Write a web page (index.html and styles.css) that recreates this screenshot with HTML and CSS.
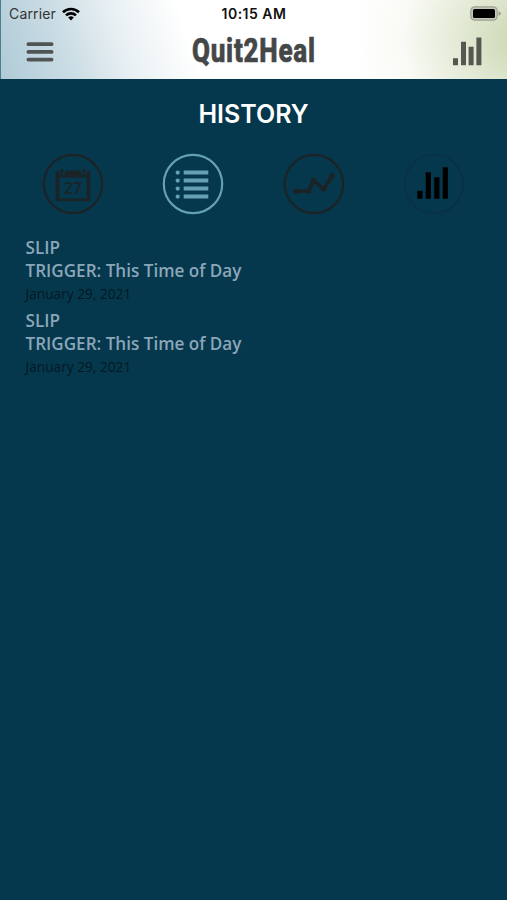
FILE: index.html
```html
<!DOCTYPE html>
<html lang="en">
<head>
    <meta charset="UTF-8">
    <meta name="viewport" content="width=device-width, initial-scale=1.0">
    <title>Quit2Heal</title>
    <link rel="stylesheet" href="styles.css">
</head>
<body>
    <header class="header">
        <div class="status-bar">
            <div class="carrier">
                <span>Carrier</span>
                <svg class="wifi" width="18" height="14" viewBox="0 0 18 14" fill="none" stroke="#000" stroke-width="2.6">
                    <path d="M1 5.2a11.6 11.6 0 0 1 16 0"/>
                    <path d="M4 8.4a7.2 7.2 0 0 1 10 0"/>
                    <path d="M9 13.4 6.2 10.6a4 4 0 0 1 5.6 0z" fill="#000" stroke="none"/>
                </svg>
            </div>
            <span class="time">10:15 AM</span>
            <svg class="battery" width="31" height="15" viewBox="0 0 31 15">
                <rect x=".8" y=".8" width="26.4" height="13.4" rx="4" fill="#c3c8b8" stroke="#9da294" stroke-width="1.2"/>
                <rect x="3" y="3" width="22" height="9" rx="1.6"/>
                <path d="M28.6 5.2q2.2 1 2.2 2.3t-2.2 2.3z" fill="#8f938b"/>
            </svg>
        </div>
        <div class="nav-bar">
            <svg class="menu" width="28" height="20" viewBox="0 0 28 20" stroke="#505456" stroke-width="3.8" stroke-linecap="round">
                <path d="M2.4 2.2h23.2M2.4 9.9h23.2M2.4 17.6h23.2"/>
            </svg>
            <span class="logo">Quit2Heal</span>
            <svg class="stats" width="29" height="29" viewBox="0 0 29 29" fill="#555851">
                <path d="M0 21.3h5v7H0zM8 4.7h5v23.6H8zM15.6 9.7h5v18.6h-5zM23.4.6h5v27.7h-5z"/>
            </svg>
        </div>
    </header>

    <main class="content">
        <h1>HISTORY</h1>
        <nav class="tabs">
            <svg class="tab" viewBox="0 0 62 62">
                <circle cx="31" cy="31" r="29.2"/>
                <path class="solid" fill-rule="evenodd" d="M13.7 18h3.2v3.6h6V18h2v1.2h12V18h2v3.6h6V18h3.4v30.3H13.7zM17.3 24.5v21h27.4v-21z"/>
                <path class="solid" d="M18.2 16h3.2v4.5h-3.2zM23.8 17.5h14V22h-14zM40.6 16h3.2v4.5h-3.2z"/>
                <text x="31" y="41">27</text>
            </svg>
            <svg class="tab active" viewBox="0 0 62 62">
                <circle cx="31" cy="31" r="29.2"/>
                <path class="solid" d="M21.7 17.6h24.6v4H21.7zM21.7 25.6h24.6v4H21.7zM21.7 33.6h24.6v4H21.7zM21.7 41.6h24.6v4H21.7z"/>
                <g class="solid">
                    <circle cx="15.7" cy="19.6" r="2.1"/>
                    <circle cx="15.7" cy="27.6" r="2.1"/>
                    <circle cx="15.7" cy="35.6" r="2.1"/>
                    <circle cx="15.7" cy="43.6" r="2.1"/>
                </g>
            </svg>
            <svg class="tab" viewBox="0 0 62 62">
                <circle cx="31" cy="31" r="29.2"/>
                <path class="trend" d="M13 38.2h12.3l5.4-10.9 10 8.7 8.6-13.3"/>
                <g class="solid">
                    <circle cx="13" cy="38.2" r="2.8"/>
                    <circle cx="25.3" cy="38" r="2.8"/>
                    <circle cx="30.7" cy="27.5" r="2.8"/>
                    <circle cx="40.7" cy="35.8" r="2.8"/>
                    <circle cx="49.3" cy="22.7" r="2.8"/>
                </g>
            </svg>
            <svg class="tab bars" viewBox="0 0 62 62">
                <circle cx="31" cy="31" r="29.2"/>
                <path class="solid" d="M14.3 37.7h5.2v8h-5.2zM22.7 19.3h5.2v26.4h-5.2zM31.3 24.3h5.2v21.4h-5.2zM39.7 14.3h5.2v31.4h-5.2z"/>
            </svg>
        </nav>
        <ul class="history">
            <li>
                <p>SLIP</p>
                <p>TRIGGER: This Time of Day</p>
                <p class="date">January 29, 2021</p>
            </li>
            <li>
                <p>SLIP</p>
                <p>TRIGGER: This Time of Day</p>
                <p class="date">January 29, 2021</p>
            </li>
        </ul>
    </main>
</body>
</html>
```
FILE: styles.css
```css
* {
    box-sizing: border-box;
}
body {
    margin: 0;
    height: 900px;
    overflow: hidden;
    background-color: #05384c;
    font-family: "Open Sans", "Noto Sans", sans-serif;
}
.header {
    height: 79px;
    border-left: 1px solid #4b7f8e;
    background: radial-gradient(ellipse 170px 150px at 103% 50%, #cbd6b0 0%, rgba(218, 227, 200, 0.8) 35%, rgba(245, 247, 238, 0.6) 70%, rgba(255, 255, 255, 0) 100%),
        linear-gradient(72deg, #afcbd7 0%, #cbdde5 14%, #e9f0f3 25%, #fff 38%);
}
.status-bar {
    display: grid;
    grid-template-columns: 1fr auto 1fr;
    align-items: center;
    height: 27px;
    padding: 0 6px 0 8px;
    font-family: Inter, sans-serif;
    font-size: 14px;
    color: #111;
}
.carrier {
    display: flex;
    align-items: center;
    gap: 6px;
    letter-spacing: 0.15px;
    color: #333;
}
.time {
    margin-right: 2px;
    font-weight: 600;
    letter-spacing: 0.5px;
}
.battery {
    justify-self: end;
}
.nav-bar {
    display: flex;
    justify-content: space-between;
    align-items: center;
    height: 49px;
    padding: 0 25px;
}
.logo {
    margin-bottom: 4px;
    font-family: Roboto, sans-serif;
    font-size: 34px;
    font-weight: 800;
    line-height: 44px;
    letter-spacing: 1px;
    color: #444748;
    -webkit-text-stroke: 0.7px #444748;
    transform: scaleX(0.765);
}
h1 {
    margin: 0;
    padding-top: 18px;
    font-family: Inter, sans-serif;
    font-size: 25px;
    font-weight: 600;
    line-height: 34px;
    text-align: center;
    color: #fff;
}
.tabs {
    display: flex;
    justify-content: space-between;
    padding: 22px 42px 0;
}
.tab {
    width: 62px;
    height: 62px;
    fill: none;
    stroke: #1b2326;
    stroke-width: 2.2;
}
.tab .solid {
    fill: #1b2326;
    stroke: none;
}
.tab text {
    fill: #1b2326;
    stroke: none;
    font-size: 16px;
    font-weight: 600;
    text-anchor: middle;
}
.tab .trend {
    stroke-width: 3.6;
}
.tab.active {
    stroke: #65a0b5;
}
.tab.active .solid {
    fill: #65a0b5;
}
.tab.bars {
    stroke: #0b3045;
    stroke-width: 1.6;
}
.tab.bars .solid {
    fill: #000;
}
.history {
    margin: 0;
    padding: 21px 25.5px 0;
    list-style: none;
}
.history li {
    height: 73px;
}
.history p {
    margin: 0;
    font-size: 17.1px;
    font-weight: 600;
    line-height: 23px;
    color: #8ba6ba;
}
.history .date {
    font-size: 13.7px;
    font-weight: 400;
    line-height: 24px;
    color: #031824;
}
```
